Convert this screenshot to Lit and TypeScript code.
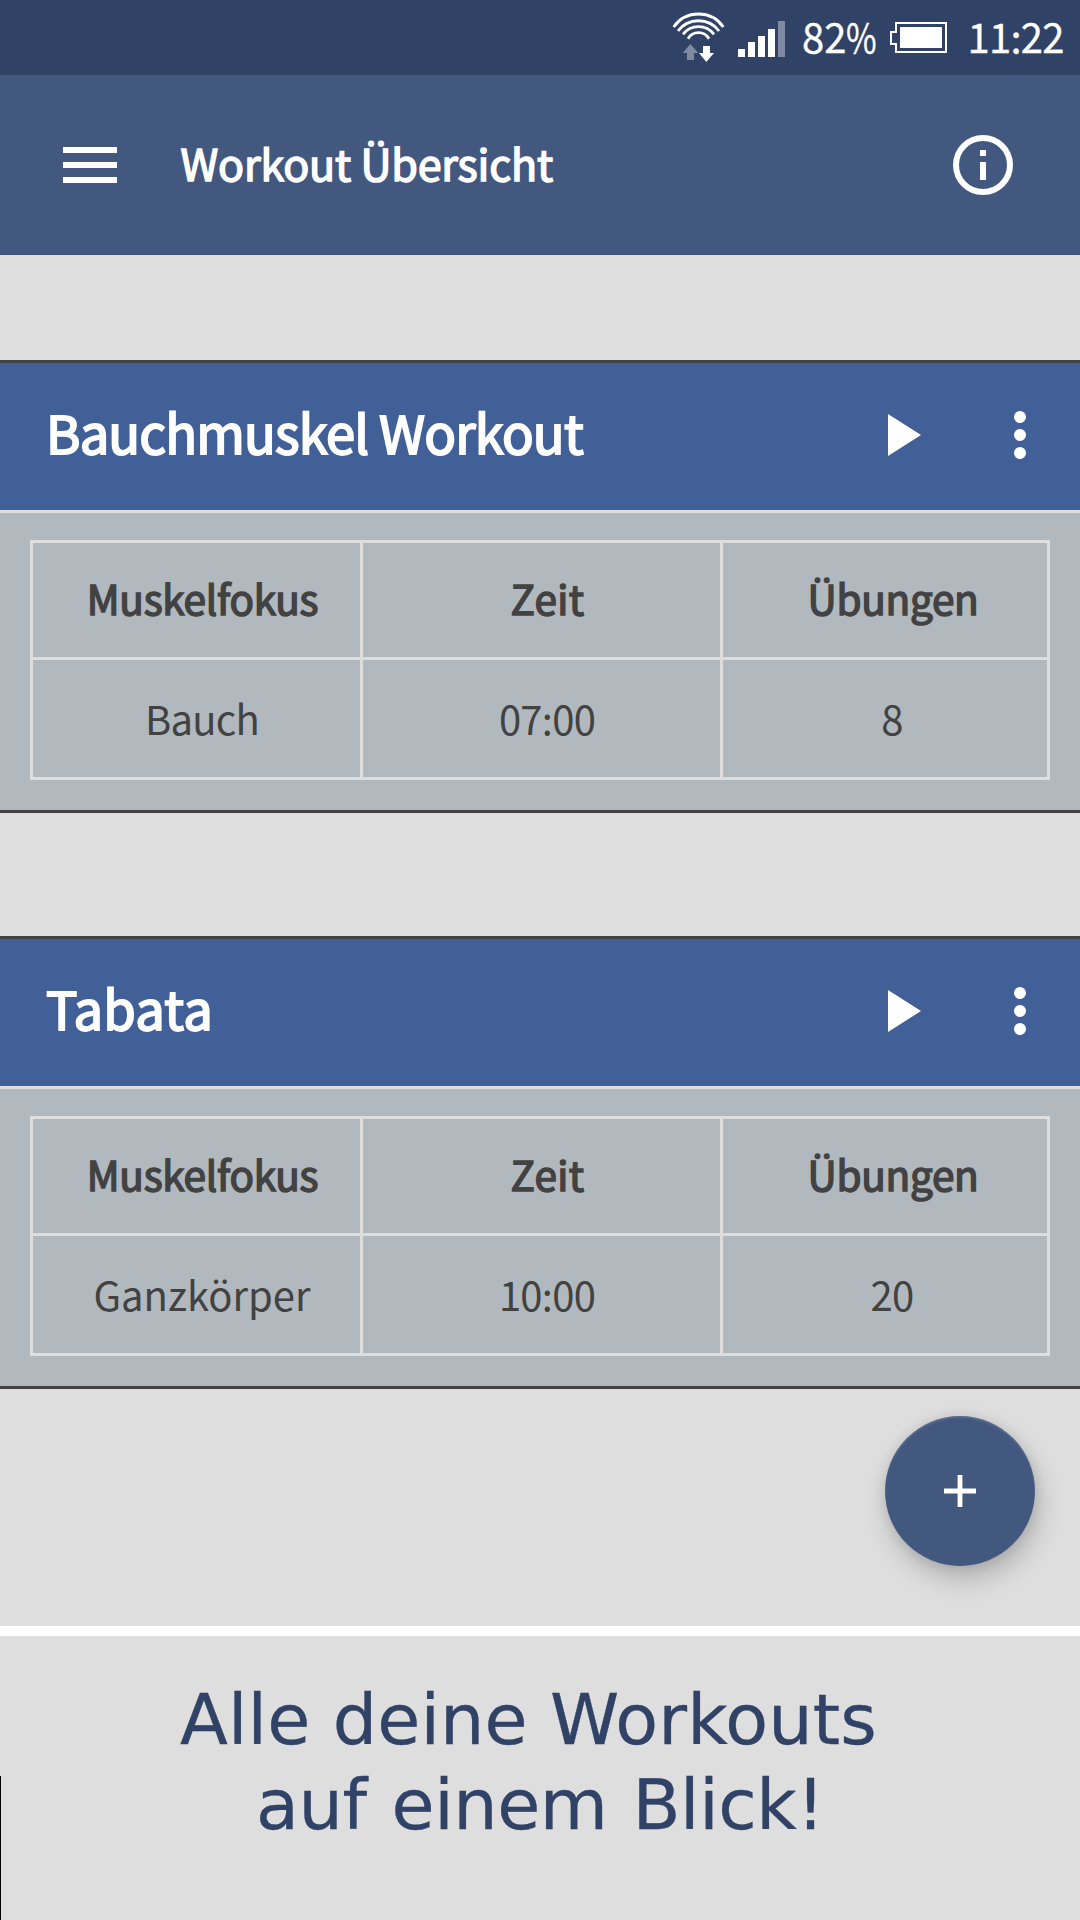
import { LitElement, html, css } from "lit";
import { customElement, property } from "lit/decorators.js";

interface Workout {
  name: string;
  kind: string;
  focus: string;
  time: string;
  count: string;
}

const WORKOUTS: Workout[] = [
  { name: "Bauchmuskel Workout", kind: "long", focus: "Bauch", time: "07:00", count: "8" },
  { name: "Tabata", kind: "short", focus: "Ganzkörper", time: "10:00", count: "20" },
];

@customElement("status-bar")
export class StatusBar extends LitElement {
  static styles = css`
    :host {
      display: flex;
      align-items: flex-start;
      box-sizing: border-box;
      height: 75px;
      padding-left: 672px;
      background: #304265;
      color: #fff;
      font-size: 40px;
      line-height: 73px;
      white-space: nowrap;
      -webkit-text-stroke: 0.3px #fff;
    }
    svg { flex: none; display: block; }
    .wifi { width: 53px; height: 51px; margin-top: 12px; }
    .signal { width: 47px; height: 36px; margin: 21px 0 0 13px; }
    .charge { flex: none; width: 87px; margin-left: 17px; }
    .percent { display: inline-block; transform: scaleX(0.83); transform-origin: left; }
    .battery { width: 57px; height: 31px; margin: 22px 0 0 1px; }
    .clock { margin-left: 20.5px; letter-spacing: -0.75px; }
  `;
  render() {
    return html`
      <svg class="wifi" viewBox="36 36 159 153">
        <g fill="none" stroke="#fff" stroke-width="8.5">
          <path d="M41 81A90.6 90.6 0 0 1 190 81" />
          <path d="M54 93A77 77 0 0 1 177 93" />
          <path d="M69 103A58.5 58.5 0 0 1 162 103" />
          <path d="M84 116A36.6 36.6 0 0 1 147 116" />
        </g>
        <path fill="#7f8aa2" d="M91 132l24 27h-13v21H81v-21H68z" />
        <path fill="#fff" d="M129 138h21v21h12l-23 27-22-27h12z" />
      </svg>
      <svg class="signal" viewBox="0 0 47 36">
        <path fill="#fff" d="M0 28h7v8H0zM10 21h7v15h-7zM20 15h7v21h-7zM30 8h7v28h-7z" />
        <path fill="#7f8aa2" d="M40 0h7v36h-7z" />
      </svg>
      <span class="charge">82<span class="percent">%</span></span>
      <svg class="battery" viewBox="0 0 57 31">
        <path fill="none" stroke="#fff" stroke-width="2" d="M6 1h50v29H6v-8H1V10h5z" />
        <path fill="#fff" d="M10 5h42v21H10z" />
      </svg>
      <span class="clock">11:22</span>
    `;
  }
}

@customElement("title-bar")
export class TitleBar extends LitElement {
  static styles = css`
    :host {
      display: flex;
      align-items: center;
      box-sizing: border-box;
      height: 180px;
      padding: 0 67px 0 63px;
      background: #43587f;
      color: #fff;
    }
    svg { flex: none; display: block; }
    .menu { width: 54px; height: 36px; }
    .title {
      flex: 1;
      margin: 0 0 0 63.5px;
      padding-bottom: 6.5px;
      font-size: 43px;
      font-weight: 400;
      line-height: 60px;
      letter-spacing: -0.18px;
      -webkit-text-stroke: 1.5px #fff;
    }
    .info { width: 60px; height: 60px; }
  `;
  render() {
    return html`
      <svg class="menu" viewBox="0 0 54 36">
        <path fill="#fff" d="M0 0h54v6H0zM0 15h54v6H0zM0 30h54v6H0z" />
      </svg>
      <h1 class="title">Workout Übersicht</h1>
      <svg class="info" viewBox="0 0 60 60">
        <circle cx="30" cy="30" r="27" fill="none" stroke="#fff" stroke-width="6" />
        <path fill="#fff" d="M27 15h6v6h-6zM27 27h6v18h-6z" />
      </svg>
    `;
  }
}

@customElement("workout-card")
export class WorkoutCard extends LitElement {
  @property({ attribute: false }) workout!: Workout;

  static styles = css`
    :host {
      display: block;
      border-top: 3px solid #424242;
      border-bottom: 3px solid #424242;
      background: #b1b9bf;
      color: #424242;
    }
    .head {
      display: flex;
      align-items: center;
      height: 147px;
      padding: 0 54px 0 46px;
      border-bottom: 3px solid #dedede;
      background: #416097;
      color: #fff;
    }
    .name {
      flex: 1;
      margin: 0;
      padding-bottom: 10.5px;
      font-size: 52.5px;
      font-weight: 400;
      line-height: 70px;
      -webkit-text-stroke: 1.9px #fff;
    }
    .long { letter-spacing: -0.85px; }
    .short { letter-spacing: 0.3px; }
    svg { flex: none; display: block; margin-bottom: 3px; }
    .play { width: 33px; height: 42px; margin-right: 93px; }
    .more { width: 12px; height: 48px; }
    .body { padding: 27px 30px 30px; }
    .table {
      display: grid;
      grid-template-columns: 327px 357px 324px;
      grid-template-rows: 114px 117px;
      gap: 3px;
      border: 3px solid #dedede;
      background: #dedede;
    }
    .cell {
      display: flex;
      align-items: center;
      justify-content: center;
      box-sizing: border-box;
      padding: 0 0 2px 11px;
      background: #b1b9bf;
      font-size: 40px;
      line-height: 58px;
      letter-spacing: -0.75px;
    }
    .cell:nth-child(3n) { padding-left: 14px; }
    .cell.label {
      padding-bottom: 5px;
      padding-left: 12px;
      font-size: 40.5px;
      letter-spacing: -0.26px;
      -webkit-text-stroke: 1.5px #424242;
    }
    .cell.label:nth-child(3n) { padding-left: 16px; }
    .cell.label.brief { letter-spacing: 0.4px; }
    .cell.wide { letter-spacing: 0; }
  `;
  render() {
    const w = this.workout;
    return html`
      <div class="head">
        <h2 class="name ${w.kind}">${w.name}</h2>
        <svg class="play" viewBox="0 0 33 42"><path fill="#fff" d="M0 0l33 21L0 42z" /></svg>
        <svg class="more" viewBox="0 0 12 48">
          <g fill="#fff">
            <circle cx="6" cy="6" r="6" /><circle cx="6" cy="24" r="6" /><circle cx="6" cy="42" r="6" />
          </g>
        </svg>
      </div>
      <div class="body">
        <div class="table">
          <div class="cell label">Muskelfokus</div>
          <div class="cell label brief">Zeit</div>
          <div class="cell label">Übungen</div>
          <div class="cell ${w.focus.length > 8 ? "wide" : ""}">${w.focus}</div>
          <div class="cell">${w.time}</div>
          <div class="cell">${w.count}</div>
        </div>
      </div>
    `;
  }
}

@customElement("app-root")
export class AppRoot extends LitElement {
  static styles = css`
    :host {
      display: flex;
      flex-direction: column;
      position: relative;
      width: 1080px;
      height: 1920px;
      overflow: hidden;
      background: #dedede;
      font-family: "Noto Sans CJK JP", "Noto Sans", sans-serif;
    }
    .list {
      display: flex;
      flex-direction: column;
      gap: 123px;
      box-sizing: border-box;
      height: 1371px;
      padding-top: 105px;
    }
    .add {
      position: absolute;
      left: 885px;
      top: 1416px;
      display: flex;
      align-items: center;
      justify-content: center;
      width: 150px;
      height: 150px;
      padding: 0;
      border: 0;
      border-radius: 50%;
      background: #43587f;
      box-shadow: 4px 13px 26px rgba(0, 0, 0, 0.2), 0 1px 12px rgba(0, 0, 0, 0.1),
        inset 0 2px 2px rgba(255, 255, 255, 0.12);
    }
    .plus { display: block; width: 32px; height: 32px; }
    .caption {
      flex: 1;
      box-sizing: border-box;
      padding-top: 42px;
      border-top: 10px solid #fff;
      color: #304265;
      font: 70px/85px "DejaVu Sans", Verdana, sans-serif;
      text-align: center;
      white-space: nowrap;
      -webkit-text-stroke: 0.3px #304265;
    }
    .first { padding-right: 23px; letter-spacing: 0.12px; }
    .second { letter-spacing: -0.4px; word-spacing: 3px; }
    .edge {
      position: absolute;
      left: 0;
      bottom: 0;
      width: 1px;
      height: 144px;
      background: #000;
    }
  `;
  render() {
    return html`
      <status-bar></status-bar>
      <title-bar></title-bar>
      <main class="list">
        ${WORKOUTS.map((w) => html`<workout-card .workout=${w}></workout-card>`)}
      </main>
      <div class="caption">
        <div class="first">Alle deine Workouts</div>
        <div class="second">auf einem Blick!</div>
      </div>
      <button class="add">
        <svg class="plus" viewBox="0 0 32 32">
          <path fill="#fff" d="M13.6 0h4.8v13.6H32v4.8H18.4V32h-4.8V18.4H0v-4.8h13.6z" />
        </svg>
      </button>
      <div class="edge"></div>
    `;
  }
}
